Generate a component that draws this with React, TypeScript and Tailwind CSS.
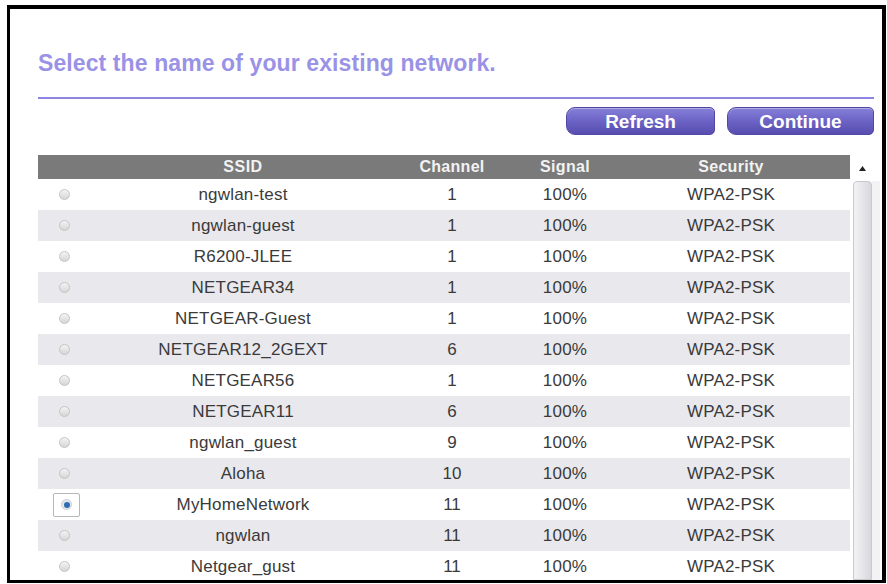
import React from "react";

const rows = [
  ["ngwlan-test", "1"],
  ["ngwlan-guest", "1"],
  ["R6200-JLEE", "1"],
  ["NETGEAR34", "1"],
  ["NETGEAR-Guest", "1"],
  ["NETGEAR12_2GEXT", "6"],
  ["NETGEAR56", "1"],
  ["NETGEAR11", "6"],
  ["ngwlan_guest", "9"],
  ["Aloha", "10"],
  ["MyHomeNetwork", "11"],
  ["ngwlan", "11"],
  ["Netgear_gust", "11"],
];

function Radio({ checked }: { checked: boolean }) {
  if (checked) {
    return (
      <div className="ml-[15px] w-[27px] h-[24px] border border-[#b8b8b8] rounded-[2px] bg-white flex items-center justify-center">
        <div className="w-[11px] h-[11px] rounded-full bg-[#e4e8ee] border border-[#c9ced6] flex items-center justify-center">
          <div className="w-[6px] h-[6px] rounded-full bg-[#2f6db0]" />
        </div>
      </div>
    );
  }
  return (
    <div className="ml-[21px] w-[11px] h-[11px] rounded-full bg-linear-to-b from-[#f4f4f4] to-[#d6d6d6] border border-[#c4c4c4]" />
  );
}

export default function App() {
  return (
    <div
      className="w-[887px] h-[584px] bg-white overflow-hidden"
      style={{ fontFamily: '"Liberation Sans", Arial, sans-serif' }}
    >
      <div className="ml-[7px] mt-[5px] w-[879px] h-[578px] border-l-[3px] border-t-4 border-r-4 border-b-[3px] border-black overflow-hidden flex flex-col bg-white">
        <div className="pl-[28px] pr-[8px]">
          <h1 className="mt-[41px] text-[23px] leading-[26px] font-bold text-[#9a92e6] tracking-[0.1px]">
            Select the name of your existing network.
          </h1>
          <div className="mt-[21px] h-[2px] bg-[#8d85e4]" />
          <div className="mt-[8px] flex justify-end gap-[12px]">
            <button className="w-[149px] h-[28px] rounded-l-[9px] rounded-r-[5px] bg-linear-to-b from-[#8780d8] via-[#6c63c6] to-[#574dae] border border-[#5148a6] text-white font-bold text-[19px] leading-none shadow-[inset_0_1px_0_rgba(255,255,255,0.35)]">
              Refresh
            </button>
            <button className="w-[147px] h-[28px] rounded-l-[9px] rounded-r-[5px] bg-linear-to-b from-[#8780d8] via-[#6c63c6] to-[#574dae] border border-[#5148a6] text-white font-bold text-[19px] leading-none shadow-[inset_0_1px_0_rgba(255,255,255,0.35)]">
              Continue
            </button>
          </div>
        </div>

        <div className="mt-[20px] pl-[28px] flex flex-1 min-h-0">
          <div className="w-[812px] flex flex-col">
            <div className="grid grid-cols-[50px_310px_108px_118px_214px_12px] h-[24px] shrink-0 bg-[#7a7a7a] text-[#f2f2f2] font-bold text-[16px] items-center text-center">
              <div />
              <div className="tracking-[0.5px]">SSID</div>
              <div className="tracking-[0.3px]">Channel</div>
              <div className="tracking-[0.3px]">Signal</div>
              <div className="tracking-[0.3px]">Security</div>
              <div />
            </div>
            {rows.map(([ssid, ch], i) => (
              <div
                key={ssid}
                className={`grid grid-cols-[50px_310px_108px_118px_214px_12px] h-[31px] shrink-0 items-center text-center text-[17px] text-[#3a3a3a] ${
                  i % 2 === 1 ? "bg-[#e9e8ed]" : "bg-white"
                }`}
              >
                <div className="flex items-center">
                  <Radio checked={ssid === "MyHomeNetwork"} />
                </div>
                <div className="tracking-[0.2px]">{ssid}</div>
                <div>{ch}</div>
                <div className="tracking-[0.2px]">100%</div>
                <div className="tracking-[0.2px]">WPA2-PSK</div>
                <div />
              </div>
            ))}
          </div>
          <div className="w-[32px] flex flex-col">
            <div className="h-[26px] shrink-0 flex items-center pl-[9px]">
              <svg width="7" height="5" viewBox="0 0 7 5">
                <path d="M0 5 L3.5 0 L7 5 Z" fill="#222" />
              </svg>
            </div>
            <div className="flex flex-1">
              <div className="ml-[3px] w-[19px] h-full rounded-t-[4px] border border-[#c9c9cf] bg-linear-to-r from-[#f2f2f4] via-[#e6e6ea] to-[#d8d8dc]" />
              <div className="w-[8px] h-full bg-[#f3f3f5]" />
            </div>
          </div>
        </div>
      </div>
    </div>
  );
}
